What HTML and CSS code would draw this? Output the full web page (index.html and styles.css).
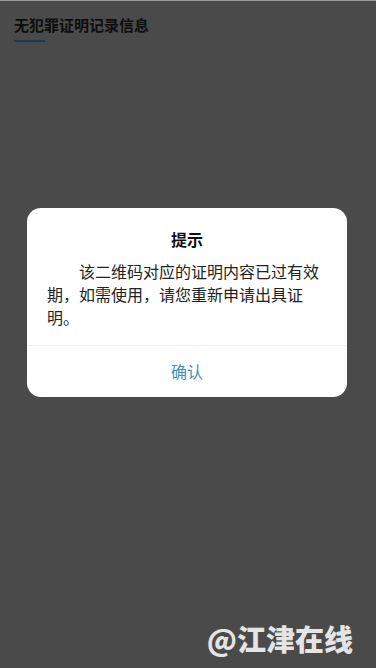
FILE: index.html
```html
<!DOCTYPE html>
<html lang="zh">
<head>
<meta charset="utf-8">
<link rel="stylesheet" href="styles.css">
</head>
<body>
<div class="page">
  <div class="header">
    <div class="header-title">无犯罪证明记录信息</div>
    <div class="header-line"></div>
  </div>
  <div class="dialog">
    <div class="dialog-title">提示</div>
    <div class="dialog-body">该二维码对应的证明内容已过有效期，如需使用，请您重新申请出具证明。</div>
    <div class="dialog-btn">确认</div>
  </div>
  <div class="watermark">@江津在线</div>
</div>
</body>
</html>
```
FILE: styles.css
```css
html, body {
  margin: 0;
  padding: 0;
  height: 100%;
}
body {
  background: #4a4a4a;
  font-family: "Noto Sans CJK SC", "Noto Sans", sans-serif;
}
.page {
  position: relative;
  height: 668px;
  border-top: 1px solid #9a9a9a;
  box-sizing: border-box;
  overflow: hidden;
}
.header {
  padding: 15px 0 0 14px;
}
.header-title {
  font-size: 15px;
  line-height: 18px;
  font-weight: 700;
  color: #0e0e0e;
}
.header-line {
  width: 31px;
  height: 2px;
  margin-top: 6px;
  background: #1e3852;
}
.dialog {
  width: 320px;
  margin: 166px 0 0 27px;
  background: #fff;
  border-radius: 14px;
  overflow: hidden;
}
.dialog-title {
  padding-top: 20px;
  font-size: 16px;
  line-height: 22px;
  font-weight: 700;
  text-align: center;
  color: #111;
}
.dialog-body {
  margin-top: 10px;
  padding: 0 24px 16px 20px;
  font-size: 16px;
  line-height: 23px;
  text-indent: 2em;
  color: #222;
}
.dialog-btn {
  border-top: 1px solid #f2f2f2;
  height: 51px;
  line-height: 51px;
  text-align: center;
  font-size: 16px;
  color: #3f8fb8;
}
.watermark {
  position: absolute;
  right: 23px;
  top: 620px;
  font-size: 29px;
  line-height: 34px;
  font-weight: 900;
  color: #e4e4e4;
  font-family: "Noto Sans CJK SC", sans-serif;
}
```
